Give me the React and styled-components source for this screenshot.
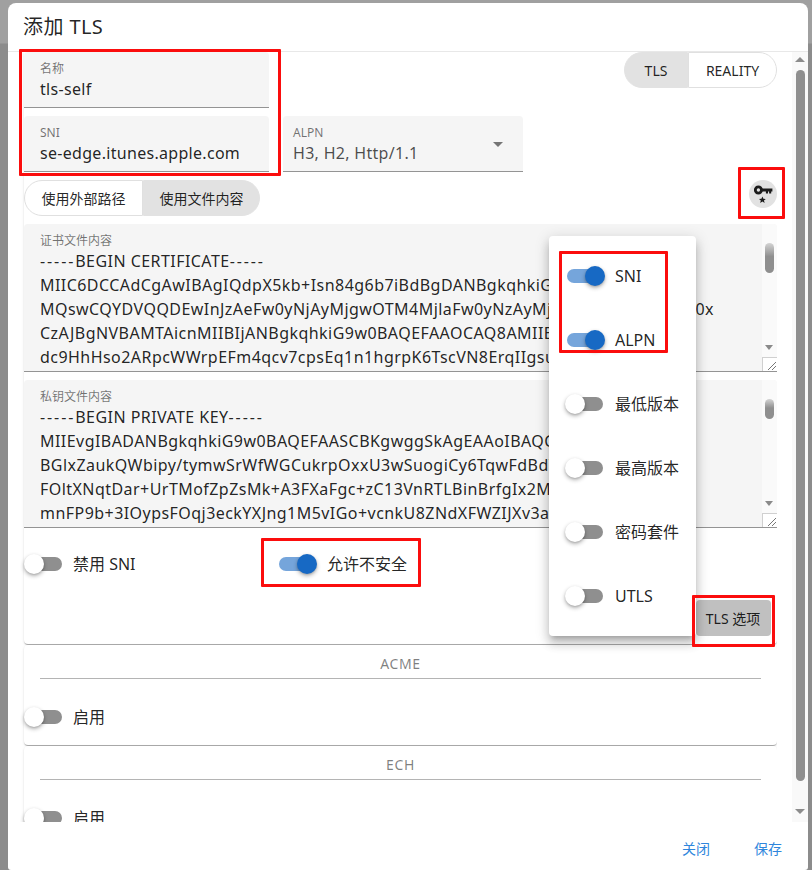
import React from "react";
import styled, { createGlobalStyle } from "styled-components";

const Global = createGlobalStyle`
  html, body { margin: 0; padding: 0; height: 870px; overflow: hidden; }
  body { font-family: "Noto Sans", "Noto Sans CJK SC", sans-serif; color: rgba(0,0,0,.87); }
  * { box-sizing: border-box; }
`;

const Page = styled.div`
  position: relative;
  width: 812px;
  height: 870px;
  overflow: hidden;
  padding: 3px 4px 0 8px;
  background: linear-gradient(#a0a0a0 0, #a0a0a0 43px, #8c8c8c 44px, #8c8c8c 100%);
`;
const Dialog = styled.div`
  height: 867px;
  background: #fff;
  border-radius: 8px 8px 3px 3px;
  display: flex;
  flex-direction: column;
  overflow: hidden;
`;
const Header = styled.div`
  height: 49px;
  flex: none;
  padding: 0 15px;
  display: flex;
  align-items: center;
  font-size: 20px;
  line-height: 1;
  letter-spacing: .4px;
  border-bottom: 1px solid #e8e8e8;
`;
const Body = styled.div`
  flex: none;
  height: 770px;
  display: flex;
  overflow: hidden;
`;
const Scroller = styled.div`
  flex: 1;
  min-width: 0;
  padding: 0 0 0 16px;
  overflow: hidden;
  display: flex;
  flex-direction: column;
  gap: 1px;
`;
const Paper = styled.section`
  flex: none;
  background: #fff;
  border-radius: 4px;
  box-shadow: 0 2px 1px -1px rgba(0,0,0,.2), 0 1px 1px rgba(0,0,0,.14), 0 1px 3px rgba(0,0,0,.1);
`;
const MainPaper = styled(Paper)`
  height: 592px;
  padding-bottom: 8px;
  display: flex;
  flex-direction: column;
  gap: 8px;
  border-radius: 0 0 4px 4px;
`;
const SectionPaper = styled(Paper)`
  height: 100px;
  padding-top: 8px;
`;
const SectionTitle = styled.div`
  height: 26px;
  margin: 0 16px;
  border-bottom: 1px solid #b4b4b4;
  font-size: 14px;
  line-height: 22px;
  letter-spacing: .6px;
  text-align: center;
  color: rgba(0,0,0,.5);
`;
const SectionRow = styled.div`
  height: 56px;
  margin-top: 10px;
  margin-left: -8px;
  display: flex;
  align-items: center;
`;
const Row = styled.div`
  display: flex;
  align-items: flex-start;
  justify-content: ${(p) => p.$justify || "flex-start"};
  gap: ${(p) => p.$gap || 0}px;
`;
const Field = styled.div`
  width: ${(p) => p.$width}px;
  height: 56px;
  padding: 9px ${(p) => p.$pad || 16}px 0;
  position: relative;
  background: #f5f5f5;
  border-radius: 4px 4px 0 0;
  border-bottom: 1px solid #949494;
`;
const FieldLabel = styled.div`
  font-size: 12px;
  line-height: 16px;
  color: rgba(0,0,0,.55);
`;
const FieldValue = styled.div`
  font-size: 16px;
  line-height: 24px;
  letter-spacing: .3px;
  white-space: nowrap;
  color: ${(p) => (p.$muted ? "rgba(0,0,0,.7)" : "rgba(0,0,0,.87)")};
`;
const Caret = styled.div`
  position: absolute;
  right: 20px;
  top: 26px;
  width: 0;
  height: 0;
  border-left: 5px solid transparent;
  border-right: 5px solid transparent;
  border-top: 5px solid #757575;
`;
const Toggle = styled.div`
  display: flex;
  flex: none;
  height: 36px;
`;
const ToggleItem = styled.div`
  width: ${(p) => p.$width}px;
  display: flex;
  align-items: center;
  justify-content: center;
  font-size: 14px;
  background: ${(p) => (p.$on ? "#e2e2e2" : "#fff")};
  border: 1px solid ${(p) => (p.$on ? "#e2e2e2" : "#e0e0e0")};
  border-radius: ${(p) => (p.$first ? "18px 0 0 18px" : "0 18px 18px 0")};
`;
const IconCircle = styled.div`
  width: 28px;
  height: 28px;
  border-radius: 50%;
  background: #e2e2e2;
  flex: none;
`;
const TextBlock = styled.div`
  height: 148px;
  display: flex;
  background: #f5f5f5;
  border-radius: 4px 4px 0 0;
  border-bottom: 1px solid #949494;
  overflow: hidden;
`;
const TextMain = styled.div`
  flex: 1;
  min-width: 0;
  padding: 9px 0 0 16px;
  overflow: hidden;
`;
const TextLabel = styled.div`
  font-size: 12px;
  line-height: 16px;
  color: rgba(0,0,0,.55);
`;
const TextLine = styled.div`
  font-size: 16px;
  line-height: 24px;
  letter-spacing: .45px;
  white-space: nowrap;
`;
const Dashes = styled.span`
  letter-spacing: 1.9px;
`;
const MiniBar = styled.div`
  width: 15px;
  flex: none;
  position: relative;
  background: #fafafa;
`;
const MiniThumb = styled.div`
  position: absolute;
  left: 3px;
  top: ${(p) => p.$top}px;
  width: 9px;
  height: ${(p) => p.$height}px;
  border-radius: 5px;
  background: linear-gradient(#d4d4d4, #8f8f8f 45%);
`;
const ArrowDown = styled.div`
  position: absolute;
  left: 3px;
  top: 121px;
  width: 0;
  height: 0;
  border-left: 4.5px solid transparent;
  border-right: 4.5px solid transparent;
  border-top: 5px solid #8a8a8a;
`;
const Resizer = styled.div`
  position: absolute;
  left: 0;
  right: 0;
  bottom: 0;
  height: 14px;
  border-left: 1px solid #d0d0d0;
  border-top: 1px solid #d0d0d0;
  background: #fff;
  display: flex;
  align-items: flex-end;
  justify-content: flex-end;
`;
const Switches = styled.div`
  height: 56px;
  margin-left: -8px;
  display: grid;
  grid-template-columns: 253px 1fr;
  align-items: center;
`;
const SwitchWrap = styled.label`
  display: flex;
  align-items: center;
  font-size: 16px;
  white-space: nowrap;
`;
const SwitchText = styled.span`
  margin-bottom: ${(p) => (p.$cjk ? 2 : 0)}px;
  margin-left: ${(p) => (p.$tight ? -1 : 0)}px;
`;
const SwitchRoot = styled.span`
  position: relative;
  width: 58px;
  height: 38px;
  flex: none;
  display: block;
`;
const SwitchTrack = styled.span`
  position: absolute;
  left: ${(p) => (p.$on ? 10 : 12)}px;
  top: 12px;
  width: ${(p) => (p.$on ? 36 : 34)}px;
  height: 14px;
  border-radius: 7px;
  background: ${(p) => (p.$on ? "#75a5db" : "#8f8f8f")};
`;
const SwitchThumb = styled.span`
  position: absolute;
  top: 9px;
  left: ${(p) => (p.$on ? "28px" : "8px")};
  width: 20px;
  height: 20px;
  border-radius: 50%;
  background: ${(p) => (p.$on ? "#1769c4" : "#fff")};
  box-shadow: 0 2px 4px rgba(0,0,0,.3), 0 1px 2px rgba(0,0,0,.12);
`;
const ActionRow = styled.div`
  display: flex;
  justify-content: flex-end;
  padding-right: 6px;
`;
const OptionsButton = styled.div`
  width: 75px;
  height: 36px;
  padding-right: 1px;
  border-radius: 4px;
  background: #c0c0c0;
  display: flex;
  align-items: center;
  justify-content: center;
  font-size: 14px;
  white-space: nowrap;
`;
const ScrollBar = styled.div`
  width: 16px;
  margin-left: 15px;
  flex: none;
  position: relative;
  background: #f9f9f9;
  display: flex;
  flex-direction: column;
  align-items: center;
`;
const ScrollUp = styled.div`
  width: 0;
  height: 0;
  margin-top: 5px;
  border-left: 5px solid transparent;
  border-right: 5px solid transparent;
  border-bottom: 5px solid #8c8c8c;
`;
const ScrollThumb = styled.div`
  width: 9px;
  height: 711px;
  margin-top: 8px;
  border-radius: 5px;
  background: #8f8f8f;
`;
const ScrollDown = styled.div`
  width: 0;
  height: 0;
  margin-top: 28px;
  border-left: 5px solid transparent;
  border-right: 5px solid transparent;
  border-top: 5px solid #8c8c8c;
`;
const Footer = styled.div`
  flex: 1;
  display: flex;
  justify-content: flex-end;
  align-items: flex-start;
  gap: 8px;
  padding: 8px 8px 0 0;
`;
const TextButton = styled.div`
  width: 64px;
  height: 36px;
  display: flex;
  align-items: center;
  justify-content: center;
  font-size: 14px;
  color: #2f86dc;
`;
const Menu = styled.div`
  position: absolute;
  left: 549px;
  top: 236px;
  width: 147px;
  padding: 8px 0;
  background: #fff;
  border-radius: 4px;
  box-shadow: 0 5px 5px -3px rgba(0,0,0,.2), 0 8px 10px 1px rgba(0,0,0,.14), 0 3px 14px 2px rgba(0,0,0,.12);
`;
const MenuItem = styled.div`
  height: 64px;
  padding-left: 8px;
  display: flex;
  align-items: center;
`;
const Mark = styled.div`
  position: absolute;
  left: ${(p) => p.$x}px;
  top: ${(p) => p.$y}px;
  width: ${(p) => p.$w}px;
  height: ${(p) => p.$h}px;
  border: 3px solid #fb0d0d;
  border-radius: 1px;
  pointer-events: none;
`;

const Switch = ({ on, label, cjk, tight }) => (
  <SwitchWrap>
    <SwitchRoot>
      <SwitchTrack $on={on} />
      <SwitchThumb $on={on} />
    </SwitchRoot>
    <SwitchText $cjk={cjk} $tight={tight}>{label}</SwitchText>
  </SwitchWrap>
);

const KeyIcon = () => (
  <svg width="28" height="28" viewBox="0 0 28 28" style={{ display: "block" }}>
    <circle cx="9.4" cy="10" r="3.1" fill="none" stroke="#1c1c1c" strokeWidth="2.8" />
    <path d="M12 8.6h11.4v2.8h-1.2v2h-2.1v-2h-1.1v2h-2.1v-2H12z" fill="#1c1c1c" />
    <path d="M13.4 16.4l1 2.3 2.4.2-1.8 1.6.6 2.4-2.2-1.3-2.2 1.3.6-2.4-1.8-1.6 2.4-.2z" fill="#1c1c1c" />
  </svg>
);

const Grip = () => (
  <svg width="12" height="12" viewBox="0 0 12 12" style={{ display: "block" }}>
    <path d="M3 11l8-8M7 11l4-4" stroke="#777" strokeWidth="1" />
  </svg>
);

const certLines = [
  "MIIC6DCCAdCgAwIBAgIQdpX5kb+Isn84g6b7iBdBgDANBgkqhkiG9w0BAQsFADAS",
  "MQswCQYDVQQDEwInJzAeFw0yNjAyMjgwOTM4MjlaFw0yNzAyMjgwOTM4MjlaMBIx0x",
  "CzAJBgNVBAMTAicnMIIBIjANBgkqhkiG9w0BAQEFAAOCAQ8AMIIBCgKCAQEAvK2",
  "dc9HhHso2ARpcWWrpEFm4qcv7cpsEq1n1hgrpK6TscVN8ErqIIgsuQ7mYt2ZcPa",
];
const keyLines = [
  "MIIEvgIBADANBgkqhkiG9w0BAQEFAASCBKgwggSkAgEAAoIBAQC8rZ1z0cHkT2",
  "BGlxZaukQWbipy/tymwSrWfWGCukrpOxxU3wSuogiCy6TqwFdBdY9dLm2Wq",
  "FOltXNqtDar+UrTMofZpZsMk+A3FXaFgc+zC13VnRTLBinBrfgIx2MhT5cR",
  "mnFP9b+3IOypsFOqj3eckYXJng1M5vIGo+vcnkU8ZNdXFWZIJXv3aPq7Yd",
];

const TextArea = ({ label, head, lines, thumbTop, thumbHeight }) => (
  <TextBlock>
    <TextMain>
      <TextLabel>{label}</TextLabel>
      <TextLine>
        <Dashes>-----</Dashes>{head}<Dashes>-----</Dashes>
      </TextLine>
      {lines.map((l) => (
        <TextLine key={l}>{l}</TextLine>
      ))}
    </TextMain>
    <MiniBar>
      <MiniThumb $top={thumbTop} $height={thumbHeight} />
      <ArrowDown />
      <Resizer>
        <Grip />
      </Resizer>
    </MiniBar>
  </TextBlock>
);

const Section = ({ title }) => (
  <SectionPaper>
    <SectionTitle>{title}</SectionTitle>
    <SectionRow>
      <Switch label="启用" cjk tight />
    </SectionRow>
  </SectionPaper>
);

export default function App() {
  return (
    <Page>
      <Global />
      <Dialog>
        <Header>添加 TLS</Header>
        <Body>
          <Scroller>
            <MainPaper>
              <Row $justify="space-between">
                <Field $width={245}>
                  <FieldLabel>名称</FieldLabel>
                  <FieldValue>tls-self</FieldValue>
                </Field>
                <Toggle>
                  <ToggleItem $width={64} $on $first>TLS</ToggleItem>
                  <ToggleItem $width={89}>REALITY</ToggleItem>
                </Toggle>
              </Row>
              <Row $gap={14}>
                <Field $width={245}>
                  <FieldLabel>SNI</FieldLabel>
                  <FieldValue>se-edge.itunes.apple.com</FieldValue>
                </Field>
                <Field $width={240} $pad={10}>
                  <FieldLabel>ALPN</FieldLabel>
                  <FieldValue $muted>H3, H2, Http/1.1</FieldValue>
                  <Caret />
                </Field>
              </Row>
              <Row $justify="space-between">
                <Toggle>
                  <ToggleItem $width={119} $first>使用外部路径</ToggleItem>
                  <ToggleItem $width={117} $on>使用文件内容</ToggleItem>
                </Toggle>
                <IconCircle>
                  <KeyIcon />
                </IconCircle>
              </Row>
              <TextArea label="证书文件内容" head="BEGIN CERTIFICATE" lines={certLines} thumbTop={19} thumbHeight={30} />
              <TextArea label="私钥文件内容" head="BEGIN PRIVATE KEY" lines={keyLines} thumbTop={19} thumbHeight={20} />
              <Switches>
                <Switch label="禁用 SNI" cjk tight />
                <Switch on label="允许不安全" cjk />
              </Switches>
              <ActionRow>
                <OptionsButton>TLS 选项</OptionsButton>
              </ActionRow>
            </MainPaper>
            <Section title="ACME" />
            <Section title="ECH" />
          </Scroller>
          <ScrollBar>
            <ScrollUp />
            <ScrollThumb />
            <ScrollDown />
          </ScrollBar>
        </Body>
        <Footer>
          <TextButton>关闭</TextButton>
          <TextButton>保存</TextButton>
        </Footer>
      </Dialog>
      <Menu>
        <MenuItem><Switch on label="SNI" /></MenuItem>
        <MenuItem><Switch on label="ALPN" /></MenuItem>
        <MenuItem><Switch label="最低版本" cjk /></MenuItem>
        <MenuItem><Switch label="最高版本" cjk /></MenuItem>
        <MenuItem><Switch label="密码套件" cjk /></MenuItem>
        <MenuItem><Switch label="UTLS" /></MenuItem>
      </Menu>
      <Mark $x={19} $y={49} $w={262} $h={127} />
      <Mark $x={738} $y={167} $w={47} $h={52} />
      <Mark $x={559} $y={251} $w={109} $h={102} />
      <Mark $x={261} $y={538} $w={160} $h={49} />
      <Mark $x={692} $y={595} $w={83} $h={52} />
    </Page>
  );
}
